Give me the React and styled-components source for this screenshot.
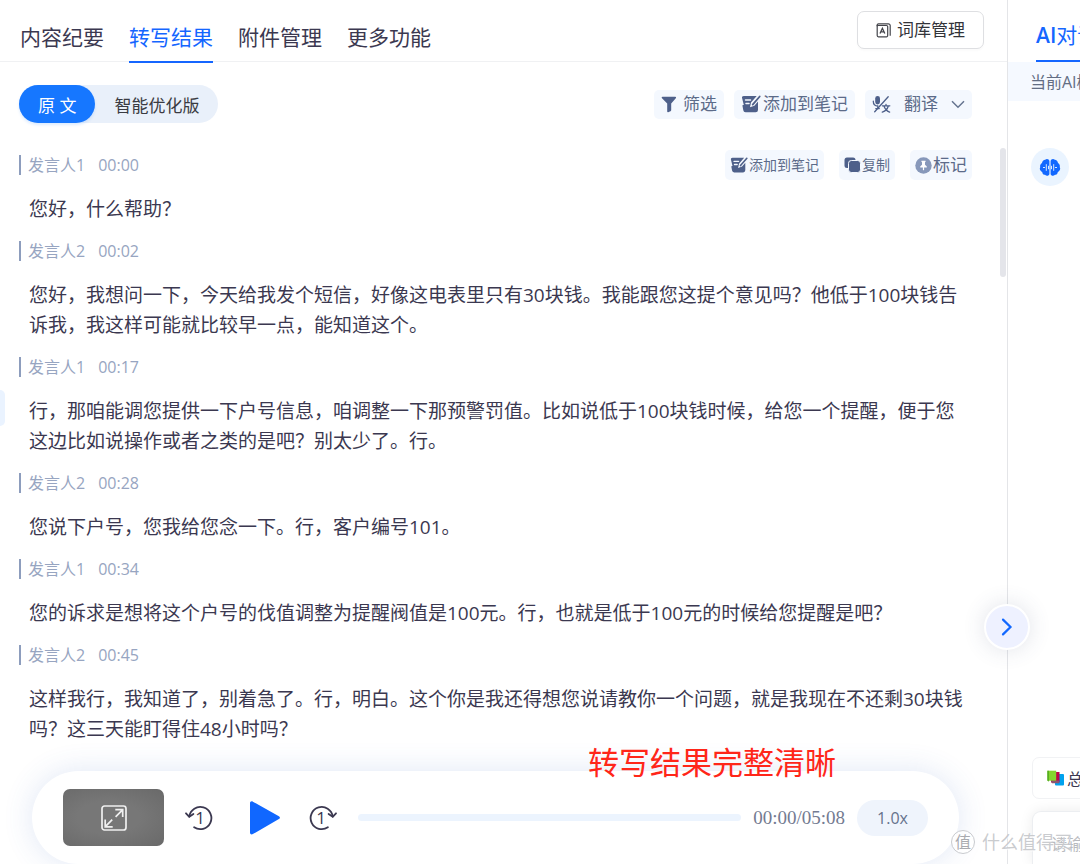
import React from "react";
import styled, { createGlobalStyle } from "styled-components";

const GlobalStyle = createGlobalStyle`
  *, *::before, *::after { box-sizing: border-box; }
  body {
    margin: 0;
    background: #fff;
    color: #3b3850;
    font-family: "Open Sans", "Noto Sans CJK SC", sans-serif;
    font-size: 16px;
  }
  button, input, textarea { font-family: inherit; margin: 0; }
  button { border: 0; padding: 0; background: none; color: inherit; cursor: pointer; white-space: nowrap; }
  svg { display: block; flex: none; }
  p { margin: 0; }
`;

const Page = styled.div`
  position: relative;
  display: grid;
  grid-template-columns: minmax(0, 1fr) 73px;
  min-height: 100vh;
  overflow: hidden;
`;

const Main = styled.main`
  position: relative;
  display: flex;
  flex-direction: column;
`;

const Header = styled.header`
  display: flex;
  justify-content: space-between;
  height: 62px;
  padding: 0 23px 0 20px;
  border-bottom: 1px solid #f0f1f3;
`;

const Tabs = styled.nav`
  display: flex;
  gap: 25px;
`;

const Tab = styled.a`
  height: 63px;
  padding-top: 21px;
  font-size: 21px;
  line-height: 32px;
  white-space: nowrap;
  text-decoration: none;
  color: ${(p) => (p.$active ? "#1566ff" : "#3b3850")};
  border-bottom: 2px solid ${(p) => (p.$active ? "#1566ff" : "transparent")};
`;

const LexiconButton = styled.button`
  display: flex;
  align-items: center;
  justify-content: center;
  gap: 6px;
  width: 127px;
  height: 38px;
  margin-top: 11px;
  border: 1px solid #dedfe2;
  border-radius: 7px;
  box-shadow: 0 2px 2px rgba(0, 0, 0, 0.02);
  background: #fff;
  color: #33343a;
  font-size: 17px;
  line-height: 24px;
`;

const Toolbar = styled.div`
  display: flex;
  align-items: center;
  justify-content: space-between;
  padding: 23px 35px 0 19px;
`;

const Segmented = styled.div`
  display: flex;
  height: 38px;
  border-radius: 19px;
  background: #e9f0fa;
`;

const Segment = styled.button`
  height: 38px;
  padding: 0 19px;
  border-radius: 19px;
  font-size: 17px;
  color: ${(p) => (p.$active ? "#fff" : "#3a3b42")};
  background: ${(p) => (p.$active ? "#1677ff" : "transparent")};
  box-shadow: ${(p) => (p.$active ? "0 2px 3px rgba(22, 119, 255, 0.15)" : "none")};
`;

const Actions = styled.div`
  display: flex;
  gap: ${(p) => p.$gap}px;
`;

const ActionButton = styled.button`
  display: flex;
  align-items: center;
  gap: ${(p) => p.$gap}px;
  height: ${(p) => (p.$row ? 30 : 29)}px;
  padding: 0 ${(p) => (p.$row ? 5 : 7)}px;
  border-radius: 5px;
  background: #f4f8fe;
  color: #5c6b89;
  font-size: ${(p) => (p.$small ? 14 : 17)}px;
  line-height: 24px;
`;

const Transcript = styled.section`
  display: flex;
  flex-direction: column;
  gap: 12px;
  padding: 27px 35px 27px 19px;
`;

const Entry = styled.article`
  display: flex;
  flex-direction: column;
  gap: 14px;
`;

const EntryHead = styled.div`
  display: flex;
  align-items: center;
  justify-content: space-between;
  height: 30px;
`;

const Speaker = styled.div`
  display: flex;
  align-items: center;
  gap: 13px;
  height: 20px;
  padding-left: 7px;
  border-left: 2px solid #8d9dbd;
  color: #97a5c1;
  font-size: 16px;
  line-height: 20px;
`;

const Speech = styled.p`
  padding: 0 4px 0 10px;
  font-size: 19px;
  line-height: 30px;
`;

const ScrollThumb = styled.div`
  position: absolute;
  top: 148px;
  right: 1px;
  width: 6px;
  height: 129px;
  border-radius: 3px;
  background: #e4e5ea;
`;

const DrawerHandle = styled.div`
  position: absolute;
  top: 390px;
  left: 0;
  width: 5px;
  height: 36px;
  border-radius: 0 6px 6px 0;
  background: #eaf3ff;
`;

const Player = styled.section`
  display: flex;
  align-items: center;
  height: 93px;
  margin: auto 48px 0 32px;
  padding: 0 31px;
  border-radius: 47px;
  background: #fff;
  box-shadow: 0 0 30px rgba(60, 105, 190, 0.16);
`;

const Preview = styled.button`
  display: grid;
  place-items: center;
  flex: none;
  width: 101px;
  height: 57px;
  border-radius: 7px;
  background: radial-gradient(ellipse at 45% 50%, #777 40%, #696969 100%);
`;

const Transport = styled.div`
  display: flex;
  align-items: center;
  gap: 29px;
  margin: 0 21px;
`;

const Track = styled.input`
  appearance: none;
  flex: 1;
  min-width: 0;
  height: 7px;
  border-radius: 4px;
  background: #ecf4fe;
  &::-webkit-slider-thumb { appearance: none; width: 0; height: 0; }
`;

const Clock = styled.span`
  margin: 0 12px;
  font-family: "Liberation Serif", serif;
  font-size: 19px;
  color: #747b91;
`;

const Speed = styled.button`
  width: 71px;
  height: 36px;
  border-radius: 18px;
  background: #eff4fc;
  color: #65728c;
  font-size: 16px;
`;

const Caption = styled.div`
  position: absolute;
  right: 171px;
  bottom: 79px;
  color: #ff2619;
  font-size: 31px;
  line-height: 46px;
  white-space: nowrap;
`;

const Side = styled.aside`
  display: flex;
  flex-direction: column;
  overflow: hidden;
  border-left: 1px solid #e4e5e8;
  white-space: nowrap;
`;

const SideTabs = styled.nav`
  height: 62px;
  padding-left: 28px;
`;

const SideTab = styled.a`
  display: block;
  width: 90px;
  height: 62px;
  padding-top: 19px;
  border-bottom: 2px solid #1566ff;
  color: #1566ff;
  font-size: 21px;
  line-height: 32px;
  text-decoration: none;
`;

const Latin = styled.span`
  font-weight: 600;
`;

const Notice = styled.div`
  height: 39px;
  padding-left: 22px;
  background: #f5f9ff;
  color: #626d83;
  font-size: 16px;
  line-height: 40px;
`;

const Avatar = styled.div`
  display: grid;
  place-items: center;
  width: 38px;
  height: 38px;
  margin: 47px 0 0 23px;
  border-radius: 50%;
  background: #eaf4ff;
`;

const SideFooter = styled.div`
  display: flex;
  flex-direction: column;
  gap: 12px;
  margin-top: auto;
  padding-left: 24px;
`;

const PromptChip = styled.button`
  display: flex;
  align-items: center;
  gap: 3px;
  width: 120px;
  height: 42px;
  padding-left: 14px;
  border: 1px solid #f1f2f4;
  border-radius: 7px;
  font-size: 16px;
`;

const PromptBox = styled.textarea`
  display: block;
  width: 200px;
  height: 53px;
  padding: 20px 18px 0;
  border: 1px solid #eceef1;
  border-bottom: 0;
  border-radius: 9px 9px 0 0;
  outline: 0;
  resize: none;
  background: #fff;
  box-shadow: 0 0 14px rgba(0, 0, 0, 0.08);
  font-size: 16px;
  line-height: 24px;
  &::placeholder { color: #b9bbc0; }
`;

const CollapseButton = styled.button`
  position: absolute;
  top: 604px;
  right: 50px;
  display: grid;
  place-items: center;
  width: 46px;
  height: 46px;
  border: 2px solid #fff;
  border-radius: 50%;
  background: #eef1ff;
  box-shadow: 0 0 22px rgba(70, 80, 120, 0.16);
`;

const Watermark = styled.div`
  position: absolute;
  right: 8px;
  bottom: 8px;
  display: flex;
  align-items: center;
  gap: 7px;
  color: rgba(195, 197, 201, 0.9);
  font-size: 18px;
  line-height: 28px;
  text-shadow: 0 1px 1px #fff;
  pointer-events: none;
`;

const Seal = styled.span`
  display: flex;
  align-items: center;
  justify-content: center;
  width: 24px;
  height: 24px;
  border: 1px solid #c9cbcf;
  border-radius: 50%;
  background: rgba(255, 255, 255, 0.8);
  color: #a9abb0;
  font-size: 16px;
  line-height: 22px;
`;

const LexiconIcon = () => (
  <svg width="15" height="15" viewBox="0 0 15 15" fill="none" stroke="#44454b" strokeWidth="1.2">
    <path d="M1.2 3.5v9.1a1.2 1.2 0 0 0 1.2 1.2h8.1a1.2 1.2 0 0 0 1.2-1.2V3.7a1.2 1.2 0 0 0-1.2-1.2H1.2Z" />
    <path d="M1.2 3.2V1.9A1.2 1.2 0 0 1 2.4.8h10a1.8 1.8 0 0 1 1.8 1.8v10.2" />
    <path d="m4 10.6 2.4-5.3 2.4 5.3M5 8.8h2.9" strokeWidth="1.3" />
  </svg>
);

const FilterIcon = () => (
  <svg width="16" height="17" viewBox="0 0 16 17" fill="#4e608a">
    <path d="M1.5.8h12.8c.8 0 1 .9.5 1.5L10.2 7.5v6.7c0 .5-.3.8-.7 1l-2.3 1c-.5.2-1-.1-1-.7V7.5L1 2.3C.4 1.7.7.8 1.5.8Z" />
  </svg>
);

const NoteIcon = ({ size = 20 }) => (
  <svg width={size} height={size} viewBox="0 0 20 20">
    <path
      d="M2.8 2h12.9L10 8.6l-1 4.7 4.4-1.6 3.6-4.2v8.4a2.4 2.4 0 0 1-2.4 2.3H4.6a2.3 2.3 0 0 1-2.3-2L1.5 12c-.1-.6.2-1 .7-1h.6L1 3.8C.8 2.8 1.6 2 2.8 2Z"
      fill="#4e608a"
    />
    <path d="M4.5 6h5M5 9.4h3" stroke="#f4f8fe" strokeWidth="1.5" strokeLinecap="round" />
    <path d="m18.7 2.5-7 8.1" stroke="#4e608a" strokeWidth="1.8" strokeLinecap="round" />
  </svg>
);

const TranslateIcon = () => (
  <svg width="19" height="19" viewBox="0 0 19 19" fill="none" stroke="#4e608a" strokeLinecap="round">
    <rect x="3.2" y="1" width="4.8" height="8.4" rx="2.4" fill="#4e608a" stroke="none" />
    <path d="M1.3 6.2c0 3 1.8 4.8 4.6 4.8M5.8 11v2.4M3.8 13.6h3.5" strokeWidth="1.3" />
    <path d="M16.2 1.7 2.7 16.8" strokeWidth="1.3" />
    <path d="M10.4 10.8h7.4M14 9.4v1.4M12 11c.8 2.8 2.7 5 5.6 6.2M16.3 11c-.8 3-2.9 5.2-6 6.2" strokeWidth="1.3" />
  </svg>
);

const ChevronDown = () => (
  <svg width="14" height="9" viewBox="0 0 14 9" fill="none" stroke="#65748f" strokeWidth="1.5">
    <path d="m1 1.3 6 6 6-6" />
  </svg>
);

const CopyIcon = () => (
  <svg width="17" height="16" viewBox="0 0 17 16">
    <rect x="0.5" y="0.5" width="11" height="10.5" rx="2.5" fill="#4e608a" />
    <rect x="4.5" y="3.5" width="12" height="12" rx="2.8" fill="#4e608a" stroke="#f4f8fe" />
  </svg>
);

const MarkIcon = () => (
  <svg width="17" height="17" viewBox="0 0 17 17">
    <circle cx="8.5" cy="8.5" r="8.2" fill="#8798ba" />
    <path d="M6.4 3.8h4.2v1l-.6.5v2.4l1.8 1.7v1.1H5.2V9.4L7 7.7V5.3l-.6-.5Z" fill="#fff" />
    <path d="M8.5 10v3.2" stroke="#fff" strokeWidth="1.2" />
  </svg>
);

const ExpandIcon = () => (
  <svg width="26" height="26" viewBox="0 0 26 26" fill="none" stroke="#f0f0f0" strokeWidth="1.7">
    <rect x="1" y="1" width="24" height="24" rx="2.5" />
    <path d="M14.3 4.7h7.4v7.4M21.3 5.1l-6.7 6.7M4.2 14.5v7.3h7.5M4.6 21.4l6.6-6.7" />
  </svg>
);

const SkipIcon = ({ forward }) => (
  <svg width="28" height="28" viewBox="0 0 28 28" fill="none" stroke="#3b3850">
    <g transform={forward ? "matrix(-1 0 0 1 28 0)" : undefined} strokeWidth="1.8" strokeLinecap="round" strokeLinejoin="round">
      <path d="M4.3 12.5a11.1 11.1 0 1 1 4.8 10.8" />
      <path d="m1 9.3 3.3 3.5L8.4 10" />
    </g>
    <text
      x={forward ? 12 : 15}
      y="20"
      textAnchor="middle"
      fontSize="17"
      fontWeight="500"
      fontFamily="Open Sans, sans-serif"
      fill="#3b3850"
      stroke="none"
    >
      1
    </text>
  </svg>
);

const PlayIcon = () => (
  <svg width="38" height="36" viewBox="0 0 38 36" fill="#1067ff">
    <path d="M8 3.3c0-1.7 1.5-2.4 2.9-1.6l26 14.6c1.4.8 1.4 2 0 2.8l-26 15c-1.4.8-2.9.1-2.9-1.6Z" />
  </svg>
);

const BrainIcon = () => (
  <svg width="22" height="19" viewBox="0 0 22 19">
    <path
      d="M10.4 3v13c-.3 1.9-2.9 2.6-4.4.8-1.7 0-2.7-1.2-2.7-2.6C1 13 .2 10.9 1.2 9.3c-.4-2 .4-3.3 1.8-4.2C3.2 3.2 4.6 2 6.2 1.8 7.5.1 10.1.9 10.4 3ZM11.6 3v13c.3 1.9 2.9 2.6 4.4.8 1.7 0 2.7-1.2 2.7-2.6 2.3-1.2 3.1-3.3 2.1-4.9.4-2-.4-3.3-1.8-4.2-.2-1.9-1.6-3.1-3.2-3.3-1.3-1.7-3.9-.9-4.2 1.2Z"
      fill="#1268ff"
    />
    <path d="M4 9.5h2M7.3 6.2v6.6M9.5 7.8v3.4M12.5 7.8v3.4M14.7 6.2v6.6M16 9.5h2" stroke="#d8e8ff" strokeWidth="1" />
  </svg>
);

const BooksIcon = () => (
  <svg width="17" height="16" viewBox="0 0 17 16">
    <rect x="8" y="4" width="9" height="11.5" rx="1" fill="#00a2ee" />
    <path d="M4 2h8.5v10.5H4Z" fill="#c00048" />
    <path d="M4 10.5h8v2.7H5Z" fill="#8b5570" />
    <path d="M.4.7h8.8v10H.4Z" fill="#84d42e" />
    <path d="M.4.7h1.4v11L.4 10.5Z" fill="#4ca51e" />
  </svg>
);

const ChevronRight = () => (
  <svg width="12" height="18" viewBox="0 0 12 18" fill="none" stroke="#1268ff" strokeWidth="2.2" strokeLinecap="round">
    <path d="m2 1.6 7.5 7.4L2 16.4" />
  </svg>
);

const tabs = ["内容纪要", "转写结果", "附件管理", "更多功能"];

const entries = [
  { speaker: "发言人1", time: "00:00", text: "您好，什么帮助？" },
  {
    speaker: "发言人2",
    time: "00:02",
    text: "您好，我想问一下，今天给我发个短信，好像这电表里只有30块钱。我能跟您这提个意见吗？他低于100块钱告诉我，我这样可能就比较早一点，能知道这个。",
  },
  {
    speaker: "发言人1",
    time: "00:17",
    text: "行，那咱能调您提供一下户号信息，咱调整一下那预警罚值。比如说低于100块钱时候，给您一个提醒，便于您这边比如说操作或者之类的是吧？别太少了。行。",
  },
  { speaker: "发言人2", time: "00:28", text: "您说下户号，您我给您念一下。行，客户编号101。" },
  {
    speaker: "发言人1",
    time: "00:34",
    text: "您的诉求是想将这个户号的伐值调整为提醒阀值是100元。行，也就是低于100元的时候给您提醒是吧？",
  },
  {
    speaker: "发言人2",
    time: "00:45",
    text: "这样我行，我知道了，别着急了。行，明白。这个你是我还得想您说请教你一个问题，就是我现在不还剩30块钱吗？这三天能盯得住48小时吗？",
  },
];

export default function App() {
  return (
    <Page lang="zh-CN">
      <GlobalStyle />
      <Main>
        <Header>
          <Tabs>
            {tabs.map((name, i) => (
              <Tab key={name} href="#" $active={i === 1}>
                {name}
              </Tab>
            ))}
          </Tabs>
          <LexiconButton>
            <LexiconIcon />
            词库管理
          </LexiconButton>
        </Header>

        <Toolbar>
          <Segmented>
            <Segment $active>原 文</Segment>
            <Segment>智能优化版</Segment>
          </Segmented>
          <Actions $gap={10}>
            <ActionButton $gap={6}>
              <FilterIcon />
              筛选
            </ActionButton>
            <ActionButton $gap={2}>
              <NoteIcon />
              添加到笔记
            </ActionButton>
            <ActionButton $gap={13}>
              <TranslateIcon />
              翻译
              <ChevronDown />
            </ActionButton>
          </Actions>
        </Toolbar>

        <Transcript>
          {entries.map((entry, i) => (
            <Entry key={entry.time}>
              <EntryHead>
                <Speaker>
                  <span>{entry.speaker}</span>
                  <time>{entry.time}</time>
                </Speaker>
                {i === 0 && (
                  <Actions $gap={15}>
                    <ActionButton $row $small $gap={1}>
                      <NoteIcon size={18} />
                      添加到笔记
                    </ActionButton>
                    <ActionButton $row $small $gap={1}>
                      <CopyIcon />
                      复制
                    </ActionButton>
                    <ActionButton $row $gap={1}>
                      <MarkIcon />
                      标记
                    </ActionButton>
                  </Actions>
                )}
              </EntryHead>
              <Speech>{entry.text}</Speech>
            </Entry>
          ))}
        </Transcript>

        <Player>
          <Preview aria-label="展开">
            <ExpandIcon />
          </Preview>
          <Transport>
            <button aria-label="后退">
              <SkipIcon />
            </button>
            <button aria-label="播放">
              <PlayIcon />
            </button>
            <button aria-label="前进">
              <SkipIcon forward />
            </button>
          </Transport>
          <Track type="range" min="0" max="308" defaultValue="0" aria-label="播放进度" />
          <Clock>00:00/05:08</Clock>
          <Speed>1.0x</Speed>
        </Player>

        <ScrollThumb />
        <DrawerHandle />
        <Caption>转写结果完整清晰</Caption>
      </Main>

      <Side>
        <SideTabs>
          <SideTab href="#">
            <Latin>AI</Latin>对话
          </SideTab>
        </SideTabs>
        <Notice>当前AI模型</Notice>
        <Avatar>
          <BrainIcon />
        </Avatar>
        <SideFooter>
          <PromptChip>
            <BooksIcon />
            总结
          </PromptChip>
          <PromptBox placeholder="请输入" aria-label="请输入" />
        </SideFooter>
      </Side>

      <CollapseButton aria-label="收起">
        <ChevronRight />
      </CollapseButton>
      <Watermark>
        <Seal>值</Seal>
        什么值得买
      </Watermark>
    </Page>
  );
}
